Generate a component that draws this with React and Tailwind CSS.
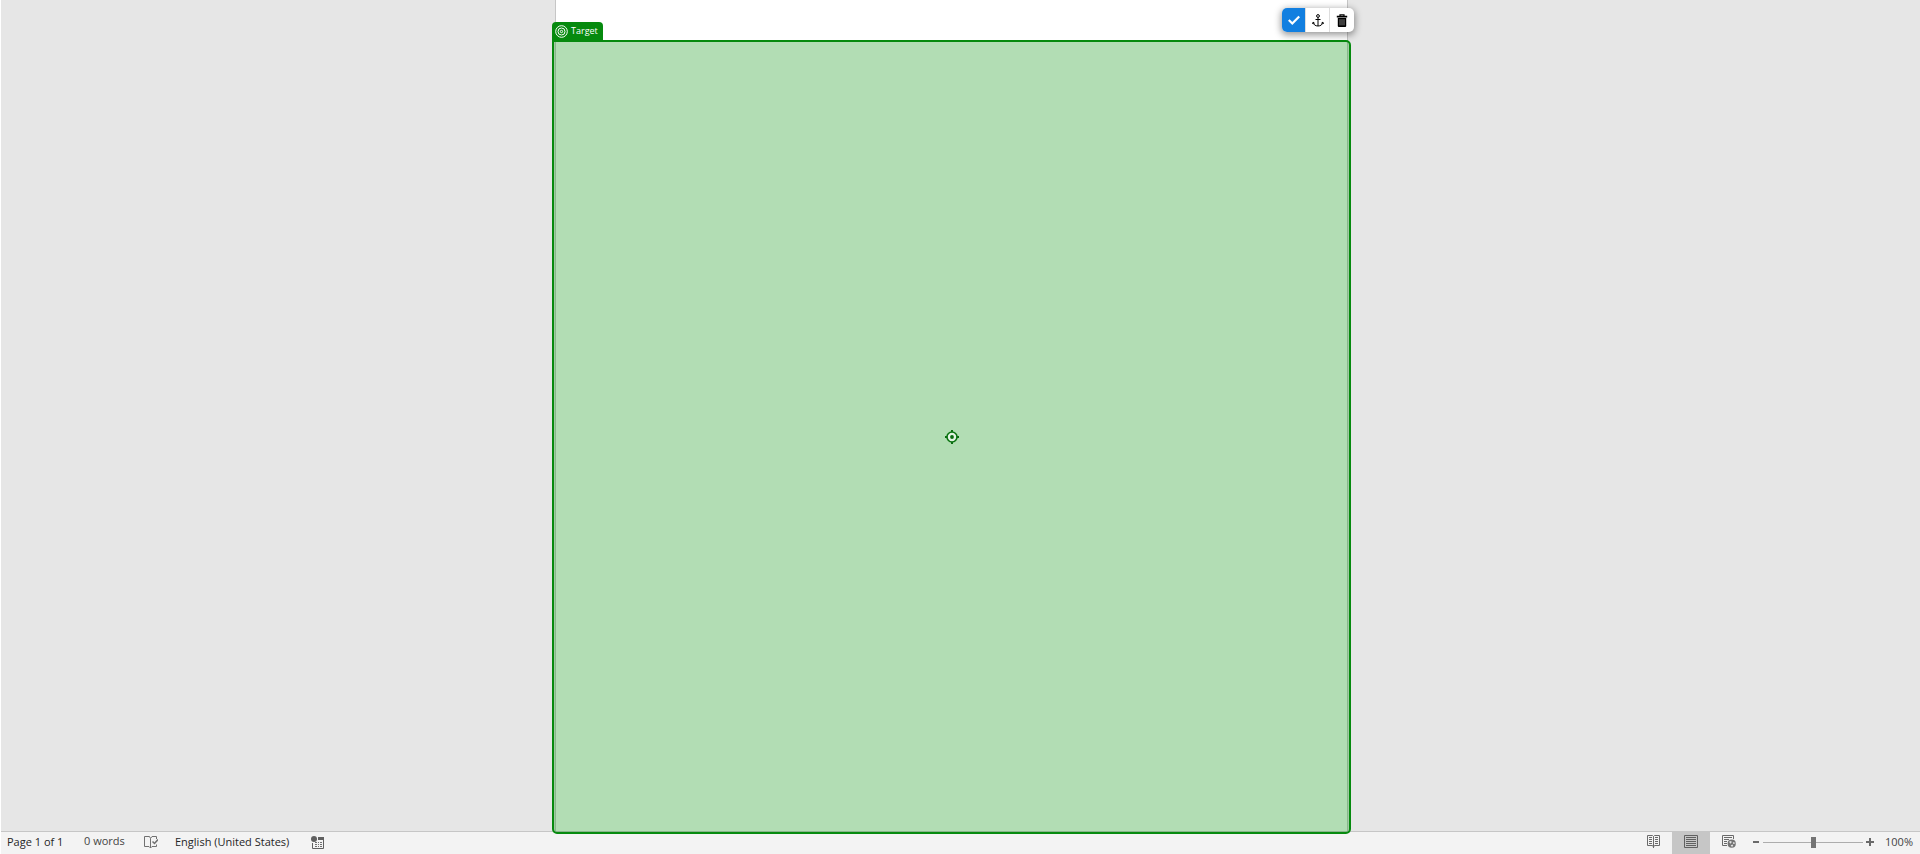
import React from "react";

function TargetRings() {
  return (
    <svg width="13" height="13" viewBox="0 0 13 13" fill="none" stroke="currentColor" strokeWidth="1" aria-hidden="true">
      <circle cx="6.5" cy="6.5" r="5.8" />
      <circle cx="6.5" cy="6.5" r="3.5" />
      <circle cx="6.5" cy="6.5" r="1.2" />
    </svg>
  );
}

function Crosshair() {
  return (
    <svg width="14" height="14" viewBox="0 0 14 14" aria-hidden="true">
      <path d="M7 0v14M0 7h14" stroke="#0a6b10" strokeWidth="2" />
      <circle cx="7" cy="7" r="5" fill="#e3f3e4" stroke="#0a7310" strokeWidth="1.6" />
      <circle cx="7" cy="7" r="1.9" fill="#0a6b10" />
    </svg>
  );
}

function CheckIcon() {
  return (
    <svg width="12" height="12" viewBox="0 0 12 12" fill="none" stroke="currentColor" strokeWidth="2.2" aria-hidden="true">
      <path d="M.8 6l3.5 3.5L11.2 2.4" />
    </svg>
  );
}

function AnchorIcon() {
  return (
    <svg width="12" height="13" viewBox="0 0 12 13" fill="none" stroke="currentColor" strokeWidth="1" aria-hidden="true">
      <circle cx="6" cy="2" r="1.4" />
      <path d="M6 3.4V12M3.500 5.500h5M1.200 8.200c.2 2.500 2.200 3.800 4.800 3.800s4.600-1.300 4.800-3.800M.4 9.800l.8-1.600 1.500 1.100M11.600 9.800l-.8-1.600-1.500 1.100" />
    </svg>
  );
}

function TrashIcon() {
  return (
    <svg width="12" height="13" viewBox="0 0 12 13" aria-hidden="true">
      <path d="M4 2V.8h4V2" fill="none" stroke="#000" strokeWidth="1.2" />
      <path d="M.8 1.800h10.400v1.700H.8zM1.800 4h8.400v8q0 1-1 1H2.800q-1 0-1-1z" fill="#000" />
      <path d="M4 5.200v6.200M6 5.200v6.200M8 5.200v6.200" stroke="#8a8a8a" strokeWidth=".9" />
    </svg>
  );
}

function ProofingIcon() {
  return (
    <svg width="14" height="13" viewBox="0 0 14 13" fill="none" stroke="#707070" strokeWidth="1" aria-hidden="true">
      <path d="M6.500 2.500L5.500.5H.5v10h4.500l1.500 1.500 1.500-1.500h4.500V8.500M6.500 2.500V12M6.500 2.500L8 .5h4.500V3" />
      <path d="M8.500 5.500l2 2L14 3.500" strokeWidth="1.500" />
    </svg>
  );
}

function MacroIcon() {
  return (
    <svg width="13" height="13" viewBox="0 0 13 13" aria-hidden="true">
      <path d="M7 1h6v3H7z" fill="#606060" />
      <path d="M1.500 7v5.500h11V4" fill="none" stroke="#606060" />
      <circle cx="3" cy="3" r="3" fill="#606060" />
      <path d="M4 6.500h2M7 6.500h1M9 6.500h2M4 8.500h2M7 8.500h1M9 8.500h2M4 10.500h2M7 10.500h1M9 10.500h2" stroke="#707070" />
    </svg>
  );
}

function ReadIcon() {
  return (
    <svg width="13" height="13" viewBox="0 0 13 13" fill="none" stroke="#6a6a6a" aria-hidden="true">
      <path d="M6.500 1.500L5.500.5H.5v10h5l1 1.500 1-1.500h5V.5h-5zM6.500 1.500V13M2 2.500h3M2 4.500h3M2 6.500h3M2 8.500h3M8 2.500h3M8 4.500h3M8 6.500h3M8 8.500h3" />
    </svg>
  );
}

function PrintIcon() {
  return (
    <svg width="14" height="13" viewBox="0 0 14 13" fill="none" stroke="#606060" aria-hidden="true">
      <path d="M.5.5h13v12H.5zM2 2.500h10M2 4.500h10M2 6.500h10M2 8.500h10M2 10.500h10" />
    </svg>
  );
}

function WebIcon() {
  return (
    <svg width="14" height="13" viewBox="0 0 14 13" fill="none" stroke="#6a6a6a" aria-hidden="true">
      <path d="M5 10.500H.5V.5h11V4M2 2.500h8M2 4.500h5M2 6.500h3M2 8.500h3" />
      <circle cx="9.700" cy="8.700" r="4.100" fill="#747474" stroke="none" />
      <path d="M7 6.800l2-.8.800 1L8.500 8.800zM10.800 7.200l1.700 0 .3 1.500-1.500.3zM8.600 10.200l2-.6.6 1.200-1.200 1.200z" fill="#e4e4e4" stroke="none" />
    </svg>
  );
}

function ToolButton({ label, active, children }) {
  return (
    <button
      type="button"
      aria-label={label}
      className={
        active
          ? "flex w-[23px] items-center justify-center rounded-l-[5px] bg-[#127fe0] text-white"
          : "flex w-6 items-center justify-center border-l border-[#dddddd] text-black"
      }
    >
      {children}
    </button>
  );
}

function Selection() {
  return (
    <section
      aria-label="Target region"
      className="absolute -inset-x-1 top-10 -bottom-[3px] z-10 flex items-center justify-center rounded-[5px] rounded-tl-none border-2 border-[#068a0e] bg-[#008e06]/30"
    >
      <div className="absolute -top-5 -left-0.5 flex h-[18px] items-center gap-[3px] rounded-t bg-[#068a0e] pr-[5px] pl-[3px] text-[9px] font-medium text-white">
        <TargetRings />
        <span>Target</span>
      </div>
      <div className="absolute -top-[34px] -right-[5px] flex h-6 rounded-[5px] bg-white pr-px shadow-[0_2px_7px_1px_rgba(0,0,0,0.4)]">
        <ToolButton label="Confirm" active>
          <CheckIcon />
        </ToolButton>
        <ToolButton label="Anchor">
          <AnchorIcon />
        </ToolButton>
        <ToolButton label="Delete">
          <TrashIcon />
        </ToolButton>
      </div>
      <Crosshair />
    </section>
  );
}

function StatusBar() {
  return (
    <footer className="flex h-[23px] items-stretch justify-between border-t border-[#c6c6c6] bg-[#f3f3f3] pr-[7px] pl-1.5 text-[11px] text-[#262626]">
      <div className="flex items-center pb-0.5">
        <span className="w-[77px]">Page 1 of 1</span>
        <span className="w-[60px] pb-0.5 text-[#444444]">0 words</span>
        <button type="button" aria-label="Proofing" className="w-[31px]">
          <ProofingIcon />
        </button>
        <span className="w-[136px]">English (United States)</span>
        <button type="button" aria-label="Record macro">
          <MacroIcon />
        </button>
      </div>
      <div className="flex items-stretch">
        <button type="button" aria-label="Read mode" className="flex w-[38px] items-center justify-center pb-[3px]">
          <ReadIcon />
        </button>
        <button type="button" aria-label="Print layout" className="flex w-[38px] items-center justify-center bg-[#c6c6c6] pb-[3px]">
          <PrintIcon />
        </button>
        <button type="button" aria-label="Web layout" className="flex w-[38px] items-center justify-center pb-[3px]">
          <WebIcon />
        </button>
        <div className="flex items-center pb-0.5 pl-[5px]">
          <button type="button" aria-label="Zoom out">
            <svg width="6" height="8" viewBox="0 0 6 8" aria-hidden="true">
              <path d="M0 4h6" stroke="#6a6a6a" strokeWidth="2" />
            </svg>
          </button>
          <input
            type="range"
            aria-label="Zoom"
            min="0"
            max="100"
            defaultValue="50"
            className="mr-[3px] ml-1 h-[11px] w-[100px] appearance-none bg-transparent [&::-webkit-slider-runnable-track]:h-px [&::-webkit-slider-runnable-track]:bg-[#adadad] [&::-webkit-slider-thumb]:-mt-[5px] [&::-webkit-slider-thumb]:h-[11px] [&::-webkit-slider-thumb]:w-[5px] [&::-webkit-slider-thumb]:appearance-none [&::-webkit-slider-thumb]:bg-[#747474]"
          />
          <button type="button" aria-label="Zoom in">
            <svg width="8" height="8" viewBox="0 0 8 8" aria-hidden="true">
              <path d="M0 4h8M4 0v8" stroke="#6a6a6a" strokeWidth="2" />
            </svg>
          </button>
        </div>
        <span className="flex w-[39px] items-center justify-end pb-0.5 text-[#444444]">100%</span>
      </div>
    </footer>
  );
}

export default function App() {
  return (
    <div className="flex min-h-screen flex-col border-l border-white bg-[#e6e6e6] font-['Open_Sans','Noto_Sans',sans-serif]">
      <main className="flex flex-1 justify-center pr-[18px]">
        <article className="relative w-full max-w-[793px] border-x border-[#c6c6c6] bg-white">
          <Selection />
        </article>
      </main>
      <StatusBar />
    </div>
  );
}
